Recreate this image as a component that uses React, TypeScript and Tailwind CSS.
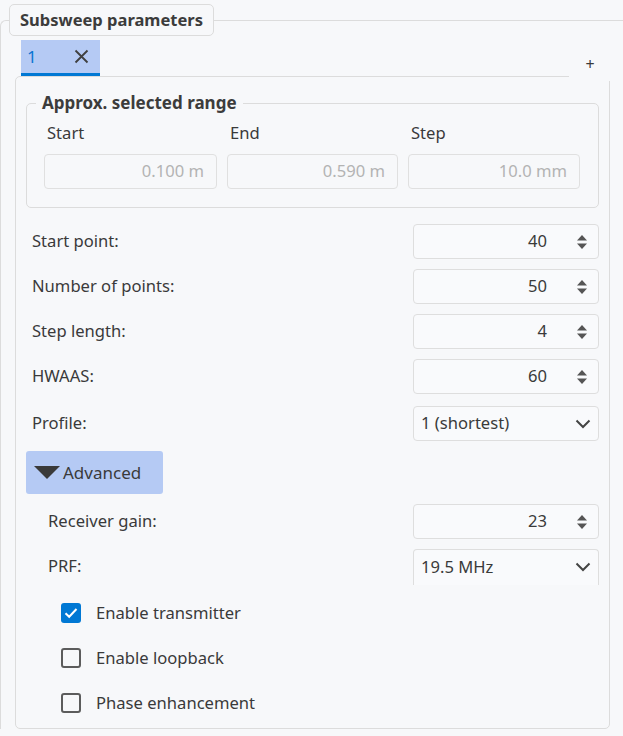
import React from "react";

const font = { fontFamily: '"Segoe UI", "Noto Sans", "Open Sans", sans-serif' };

function SpinArrows() {
  return (
    <svg width="12" height="18" viewBox="0 0 12 18" className="shrink-0">
      <path d="M1 7.5 L6 2 L11 7.5 Z" fill="#555" />
      <path d="M1 10.5 L6 16 L11 10.5 Z" fill="#555" />
    </svg>
  );
}

function Chevron() {
  return (
    <svg width="16" height="10" viewBox="0 0 16 10" className="shrink-0">
      <path d="M1.5 1.5 L8 8 L14.5 1.5" fill="none" stroke="#444" strokeWidth="2" />
    </svg>
  );
}

function SpinBox({ value }: { value: string }) {
  return (
    <div className="flex h-[35px] w-[186px] items-center rounded-[4px] border border-[#dedede] bg-[#f9fafc] pr-[10px]">
      <div className="flex-1 pr-[29px] text-right text-[16.6px] text-[#3a3a3a]">{value}</div>
      <SpinArrows />
    </div>
  );
}

function Combo({ value, clipped }: { value: string; clipped?: boolean }) {
  return (
    <div
      className={
        clipped
          ? "flex h-[36px] w-[186px] items-center rounded-t-[4px] border border-b-0 border-[#dedede] bg-[#f9fafc] pl-[7px] pr-[7px]"
          : "flex h-[35px] w-[186px] items-center rounded-[4px] border border-[#dedede] bg-[#f9fafc] pl-[7px] pr-[7px]"
      }
    >
      <div className="flex-1 text-[16.6px] text-[#3a3a3a]">{value}</div>
      <Chevron />
    </div>
  );
}

function Row({ label, children, indent }: { label: string; children: React.ReactNode; indent?: boolean }) {
  return (
    <div className="flex h-[35px] items-center justify-between">
      <div className={indent ? "pl-[22px] text-[16.6px] text-[#3a3a3a]" : "pl-[6px] text-[16.6px] text-[#3a3a3a]"}>{label}</div>
      {children}
    </div>
  );
}

function Check({ label, checked }: { label: string; checked?: boolean }) {
  return (
    <div className="flex h-[24px] items-center pl-[35px]">
      {checked ? (
        <div className="flex h-[20px] w-[20px] items-center justify-center rounded-[3px] bg-[#0078d4]">
          <svg width="14" height="12" viewBox="0 0 14 12">
            <path d="M1.5 6.2 L5.2 9.8 L12.5 2" fill="none" stroke="#fff" strokeWidth="2" />
          </svg>
        </div>
      ) : (
        <div className="h-[20px] w-[20px] rounded-[3px] border-2 border-[#5c5c5c]" />
      )}
      <div className="pl-[15px] text-[16.6px] text-[#3a3a3a]">{label}</div>
    </div>
  );
}

function RangeInput({ label, value, w }: { label: string; value: string; w: string }) {
  return (
    <div className={"flex flex-col " + w}>
      <div className="h-[26px] pl-[3px] text-[16.6px] leading-[26px] text-[#3a3a3a]">{label}</div>
      <div className="mt-[8px] flex h-[35px] items-center justify-end rounded-[4px] border border-[#e0e0e0] pr-[12px] text-[16.6px] text-[#b3b3b3]">
        {value}
      </div>
    </div>
  );
}

export default function App() {
  return (
    <div className="h-[736px] w-[623px] overflow-hidden bg-[#f7f8fa]" style={font}>
      <div className="relative mt-[20px] w-[640px] rounded-tl-[6px] border-l border-t border-[#dcdcdc] pl-[14px] pt-[19px]">
        <div className="absolute left-[8px] top-[-17px] rounded-[5px] border border-[#dcdcdc] bg-[#f7f8fa] px-[10px] text-[16.5px] font-bold leading-[30px] text-[#3c3c3c]">
          Subsweep parameters
        </div>

        <div className="flex">
          <div className="ml-[6px] flex h-[36px] w-[79px] items-center justify-between border-b-[3px] border-[#0078d4] bg-[#b5caf4] pl-[6px] pr-[11px]">
            <span className="text-[17px] text-[#0a74d2]">1</span>
            <svg width="15" height="15" viewBox="0 0 15 15">
              <path d="M1.5 1.5 L13.5 13.5 M13.5 1.5 L1.5 13.5" stroke="#3f3f3f" strokeWidth="1.8" />
            </svg>
          </div>
        </div>

        <div className="relative h-[653px] w-[595px] rounded-[5px] border border-[#dcdcdc] px-[10px] pt-[26px]">
          <div className="absolute right-[-2px] top-[-26px] flex h-[30px] w-[42px] items-start justify-center bg-[#f7f8fa] pt-[5px] text-[16px] leading-[16px] text-[#3a3a3a]">
            +
          </div>

          <div className="relative h-[105px] rounded-[5px] border border-[#dcdcdc] pl-[17px] pr-[17px] pt-[16px]">
            <div className="absolute left-[9px] top-[-13px] bg-[#f7f8fa] px-[6px] text-[17px] font-bold leading-[24px] text-[#3c3c3c]">
              Approx. selected range
            </div>
            <div className="flex gap-[10px]">
              <RangeInput label="Start" value="0.100 m" w="w-[173px]" />
              <RangeInput label="End" value="0.590 m" w="w-[171px]" />
              <RangeInput label="Step" value="10.0 mm" w="w-[172px]" />
            </div>
          </div>

          <div className="mt-[16px] flex flex-col gap-[10px]">
            <Row label="Start point:"><SpinBox value="40" /></Row>
            <Row label="Number of points:"><SpinBox value="50" /></Row>
            <Row label="Step length:"><SpinBox value="4" /></Row>
            <Row label="HWAAS:"><SpinBox value="60" /></Row>
            <div className="mt-[2px]">
              <Row label="Profile:"><Combo value="1 (shortest)" /></Row>
            </div>
            <div className="flex h-[43px] w-[137px] items-center gap-[3px] rounded-[3px] bg-[#b5caf4] pl-[8px] text-[17px] text-[#3a3a3a]">
              <svg width="26" height="14" viewBox="0 0 26 14">
                <path d="M0 0 L26 0 L13 13 Z" fill="#3a3a3a" />
              </svg>
              <span>Advanced</span>
            </div>
            <Row label="Receiver gain:" indent><SpinBox value="23" /></Row>
            <Row label="PRF:" indent><Combo value="19.5 MHz" clipped /></Row>
          </div>

          <div className="mt-[17px] flex flex-col gap-[21px]">
            <Check label="Enable transmitter" checked />
            <Check label="Enable loopback" />
            <Check label="Phase enhancement" />
          </div>
        </div>
      </div>
    </div>
  );
}
